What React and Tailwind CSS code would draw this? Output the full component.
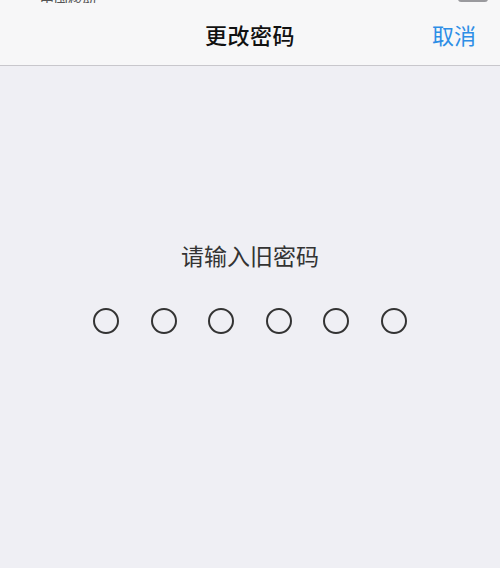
import React from 'react'

export default function App() {
  const dots = [0, 1, 2, 3, 4, 5]

  return (
    <div className="flex flex-col w-[500px] h-[568px] bg-[#efeff4] overflow-hidden" style={{ fontFamily: '"Noto Sans CJK SC", "Noto Sans", sans-serif' }}>
      <div className="bg-[#f7f7f8] border-b border-[#c8c7cc]">
        {/* status bar, only its bottom edge is in the shot */}
        <div className="h-[3px] overflow-hidden flex items-end justify-between px-[40px]">
          <div className="text-[14px] leading-[14px] text-[#555] mb-[-2px]">中国移动</div>
          <div className="w-[30px] h-[12px] rounded-[3px] border-2 border-[#9a9a9e] mb-[1px] mr-[-28px]" />
        </div>
        <div className="relative h-[62px] flex items-center justify-center">
          <div className="text-[22px] text-[#111] font-medium tracking-[0.5px]">更改密码</div>
          <button className="absolute right-[24px] text-[22px] text-[#2d8ee6]">取消</button>
        </div>
      </div>

      <div className="flex flex-col items-center pt-[172px]">
        <div className="text-[23px] text-[#333] leading-[34px]">请输入旧密码</div>
        <div className="flex gap-[31.6px] mt-[36px]">
          {dots.map(i => (
            <div key={i} className="w-[26px] h-[26px] rounded-full border-2 border-[#333]" />
          ))}
        </div>
      </div>
    </div>
  )
}
